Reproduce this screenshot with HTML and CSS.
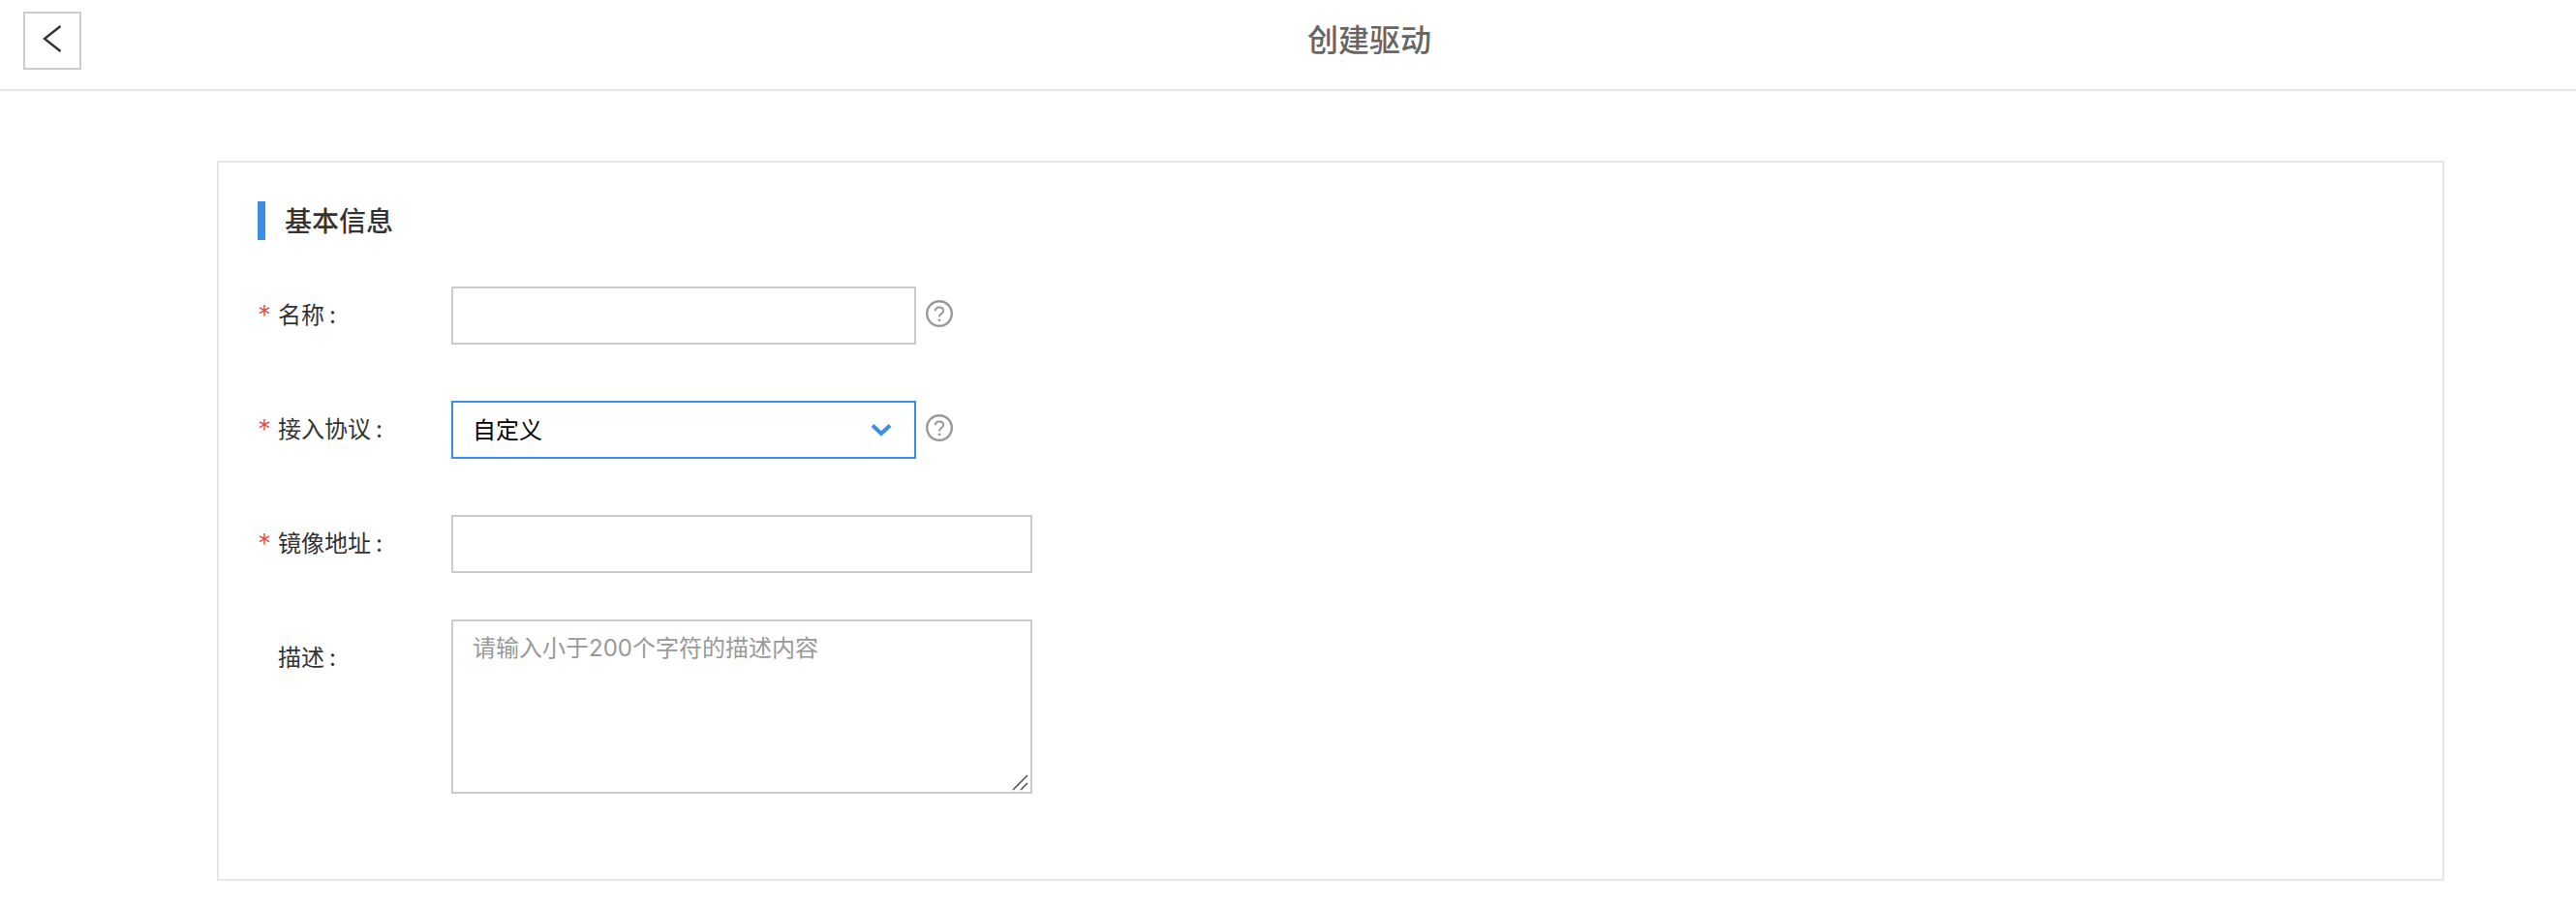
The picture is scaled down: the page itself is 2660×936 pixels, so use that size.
FILE: index.html
```html
<!DOCTYPE html>
<html lang="zh-CN">
<head>
<meta charset="utf-8">
<title>创建驱动</title>
<link rel="stylesheet" href="styles.css">
</head>
<body>
<header class="topbar">
  <button class="back" type="button" aria-label="返回">
    <svg width="20" height="28" viewBox="0 0 20 28" fill="none"><path d="M18.5 1 L2 14 L18.5 27" stroke="#333" stroke-width="2.4"/></svg>
  </button>
  <h1 class="page-title">创建驱动</h1>
</header>
<main class="main">
  <section class="card">
    <h2 class="section-title">基本信息</h2>
    <div class="row">
      <label class="label"><span class="star">*</span><span>名称</span><span class="colon">:</span></label>
      <input class="field field-short" type="text">
      <svg class="help" width="28" height="28" viewBox="0 0 28 28" fill="none"><circle cx="14" cy="14" r="12.8" stroke="#999" stroke-width="2.4"/><path d="M9.8 11.2 C9.8 8.8 11.6 7.4 14 7.4 C16.4 7.4 18.2 8.8 18.2 11 C18.2 12.8 17 13.6 15.8 14.4 C14.6 15.2 14 15.9 14 17.6" stroke="#999" stroke-width="2"/><circle cx="14" cy="20.8" r="1.4" fill="#999"/></svg>
    </div>
    <div class="row">
      <label class="label"><span class="star">*</span><span>接入协议</span><span class="colon">:</span></label>
      <div class="field field-short select">
        <span class="select-value">自定义</span>
        <svg width="22" height="14" viewBox="0 0 22 14" fill="none"><path d="M2 2.5 L11 11 L20 2.5" stroke="#3a8ee6" stroke-width="4"/></svg>
      </div>
      <svg class="help" width="28" height="28" viewBox="0 0 28 28" fill="none"><circle cx="14" cy="14" r="12.8" stroke="#999" stroke-width="2.4"/><path d="M9.8 11.2 C9.8 8.8 11.6 7.4 14 7.4 C16.4 7.4 18.2 8.8 18.2 11 C18.2 12.8 17 13.6 15.8 14.4 C14.6 15.2 14 15.9 14 17.6" stroke="#999" stroke-width="2"/><circle cx="14" cy="20.8" r="1.4" fill="#999"/></svg>
    </div>
    <div class="row">
      <label class="label"><span class="star">*</span><span>镜像地址</span><span class="colon">:</span></label>
      <input class="field field-long" type="text">
    </div>
    <div class="row row-top">
      <label class="label label-top"><span class="star"></span><span>描述</span><span class="colon">:</span></label>
      <div class="area-wrap">
        <textarea class="field field-long area" placeholder="请输入小于200个字符的描述内容"></textarea>
        <svg class="grip" width="18" height="18" viewBox="0 0 18 18" fill="none"><path d="M1 17 L16 2 M9 17 L16 10" stroke="#555" stroke-width="1.6"/></svg>
      </div>
    </div>
  </section>
</main>
</body>
</html>
```
FILE: styles.css
```css
* { box-sizing: border-box; }
html, body { margin: 0; padding: 0; background: #fff; }
body {
  height: 936px;
  overflow: hidden;
  font-family: Inter, "Noto Sans CJK SC", sans-serif;
  font-size: 24px;
  color: #333;
}
.topbar {
  display: flex;
  align-items: flex-start;
  height: 94px;
  padding: 12px 0 0 24px;
  border-bottom: 2px solid #e6e6e6;
}
.back {
  display: flex;
  align-items: center;
  justify-content: center;
  width: 60px;
  height: 60px;
  padding: 0 1px 4px 0;
  border: 2px solid #ccc;
  background: #fff;
}
.page-title {
  flex: 1;
  margin: 0;
  padding-left: 84px;
  text-align: center;
  font-size: 32px;
  font-weight: 500;
  line-height: 60px;
  color: #666;
}
.main { padding: 72px 136px 0 224px; }
.card {
  height: 744px;
  padding: 40px;
  border: 2px solid #e6e6e6;
}
.section-title {
  margin: 0 0 48px;
  padding: 3px 0 0 20px;
  border-left: 8px solid #3a8ee6;
  font-size: 28px;
  font-weight: 500;
  line-height: 37px;
  color: #333;
}
.row {
  display: flex;
  align-items: center;
  margin-bottom: 58px;
}
.row-top { align-items: flex-start; }
.row:nth-of-type(3) { margin-bottom: 48px; }
.label {
  display: flex;
  align-items: center;
  width: 200px;
  flex: none;
  line-height: 36px;
}
.label-top { padding-top: 22px; }
.star {
  width: 21px;
  font-size: 28px;
  font-weight: 300;
  color: #e5484d;
}
.colon { margin-left: 5px; }
.field {
  display: block;
  height: 60px;
  margin: 0;
  padding: 0 20px;
  border: 2px solid #ccc;
  border-radius: 0;
  background: #fff;
  outline: none;
  font: inherit;
}
.field-short { width: 480px; }
.field-long { width: 600px; }
.select {
  display: flex;
  align-items: center;
  justify-content: space-between;
  padding-right: 23px;
  border-color: #3a8ee6;
  color: #000;
}
.select-value { padding-bottom: 4px; }
.area-wrap { position: relative; }
.area {
  height: 180px;
  padding: 10px 20px;
  line-height: 36px;
  resize: none;
}
.area::placeholder { color: #999; opacity: 1; }
.grip {
  position: absolute;
  right: 3px;
  bottom: 3px;
}
.help {
  flex: none;
  margin: -4px 0 0 10px;
}
```
